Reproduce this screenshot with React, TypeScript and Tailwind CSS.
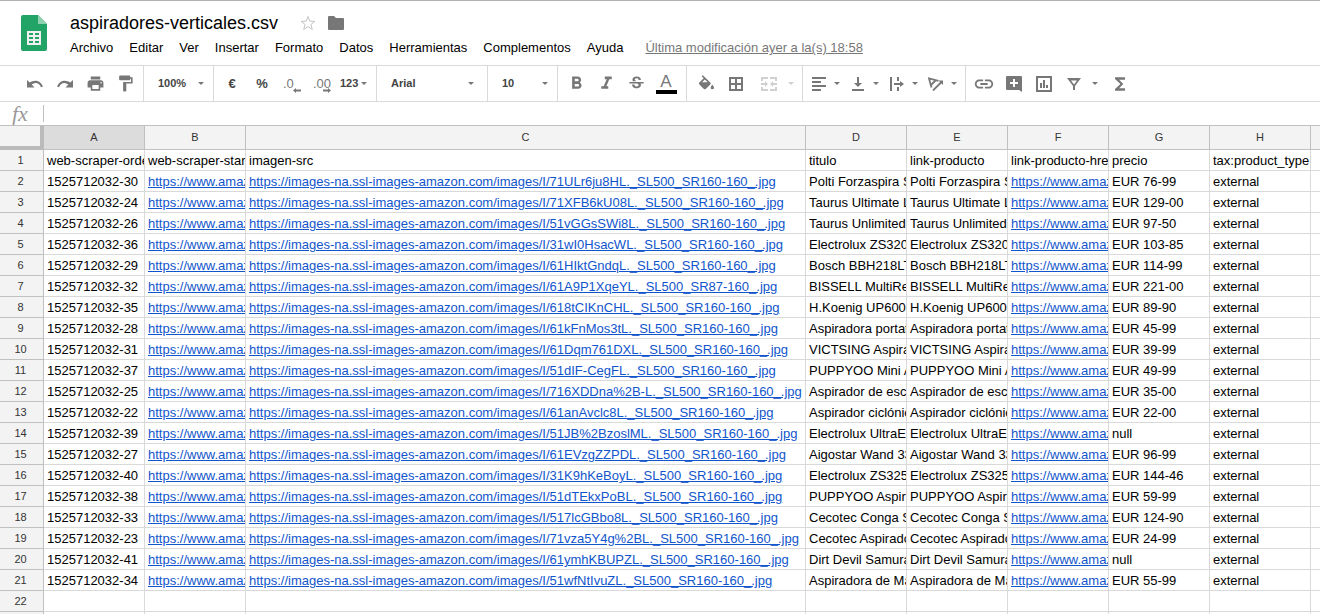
import React from "react";
import {
    MdFormatBold,
    MdFormatItalic,
    MdFormatPaint,
    MdFunctions,
    MdInsertLink,
    MdPrint,
    MdStrikethroughS,
} from "react-icons/md";

const menus = ["Archivo", "Editar", "Ver", "Insertar", "Formato", "Datos", "Herramientas", "Complementos", "Ayuda"];

const columns = ["A", "B", "C", "D", "E", "F", "G", "H"];

const imageBase = "https://images-na.ssl-images-amazon.com/images/I/";
const productUrl = "https://www.amazon.es";

// order suffix, image file, title, price
const products = [
    ["30", "71ULr6ju8HL._SL500_SR160-160_.jpg", "Polti Forzaspira SR", "EUR 76-99"],
    ["24", "71XFB6kU08L._SL500_SR160-160_.jpg", "Taurus Ultimate Li", "EUR 129-00"],
    ["26", "51vGGsSWi8L._SL500_SR160-160_.jpg", "Taurus Unlimited", "EUR 97-50"],
    ["36", "31wI0HsacWL._SL500_SR160-160_.jpg", "Electrolux ZS320", "EUR 103-85"],
    ["29", "61HIktGndqL._SL500_SR160-160_.jpg", "Bosch BBH218LT", "EUR 114-99"],
    ["32", "61A9P1XqeYL._SL500_SR87-160_.jpg", "BISSELL MultiReach", "EUR 221-00"],
    ["35", "618tCIKnCHL._SL500_SR160-160_.jpg", "H.Koenig UP600", "EUR 89-90"],
    ["28", "61kFnMos3tL._SL500_SR160-160_.jpg", "Aspiradora portatil", "EUR 45-99"],
    ["31", "61Dqm761DXL._SL500_SR160-160_.jpg", "VICTSING Aspirador", "EUR 39-99"],
    ["37", "51dIF-CegFL._SL500_SR160-160_.jpg", "PUPPYOO Mini As", "EUR 49-99"],
    ["25", "716XDDna%2B-L._SL500_SR160-160_.jpg", "Aspirador de escoba", "EUR 35-00"],
    ["22", "61anAvclc8L._SL500_SR160-160_.jpg", "Aspirador ciclónico", "EUR 22-00"],
    ["39", "51JB%2BzoslML._SL500_SR160-160_.jpg", "Electrolux UltraEn", "null"],
    ["27", "61EVzgZZPDL._SL500_SR160-160_.jpg", "Aigostar Wand 33", "EUR 96-99"],
    ["40", "31K9hKeBoyL._SL500_SR160-160_.jpg", "Electrolux ZS325", "EUR 144-46"],
    ["38", "51dTEkxPoBL._SL500_SR160-160_.jpg", "PUPPYOO Aspirador", "EUR 59-99"],
    ["33", "517lcGBbo8L._SL500_SR160-160_.jpg", "Cecotec Conga Slim", "EUR 124-90"],
    ["23", "71vza5Y4g%2BL._SL500_SR160-160_.jpg", "Cecotec Aspirador", "EUR 24-99"],
    ["41", "61ymhKBUPZL._SL500_SR160-160_.jpg", "Dirt Devil Samurai", "null"],
    ["34", "51wfNtIvuZL._SL500_SR160-160_.jpg", "Aspiradora de Mano", "EUR 55-99"],
];

const rows: string[][] = [
    ["web-scraper-order", "web-scraper-start", "imagen-src", "titulo", "link-producto", "link-producto-href", "precio", "tax:product_type"],
    ...products.map(([order, image, title, price]) => [
        "1525712032-" + order,
        productUrl,
        imageBase + image,
        title,
        title,
        productUrl,
        price,
        "external",
    ]),
    ["", "", "", "", "", "", "", ""],
];

const SheetsLogo = () => (
    <svg width="26" height="36" viewBox="0 0 26 36" aria-hidden="true">
        <path d="M2 0h15l9 9v25a2 2 0 0 1-2 2H2a2 2 0 0 1-2-2V2a2 2 0 0 1 2-2z" fill="#21a465" />
        <path d="M17 0l9 9h-9z" fill="#8ed1b1" />
        <path d="M6 16h14v14H6z" fill="#f1f1f1" />
        <path d="M8 18h4v2H8zM14 18h4v2h-4zM8 22h4v2H8zM14 22h4v2h-4zM8 26h4v2H8zM14 26h4v2h-4z" fill="#21a465" />
    </svg>
);

const StarIcon = () => (
    <svg width="16" height="16" viewBox="0 0 16 16" fill="none" stroke="currentColor" aria-hidden="true">
        <path d="M8 1.500l1.800 4.700 5 .200-3.900 3.100 1.400 4.900L8 11.600l-4.300 2.800 1.400-4.900L1.200 6.400l5-.200z" />
    </svg>
);

const FolderIcon = () => (
    <svg width="16" height="14" viewBox="0 0 16 14" aria-hidden="true">
        <path d="M0 1a1 1 0 0 1 1-1h5l2 2h7a1 1 0 0 1 1 1v10a1 1 0 0 1-1 1H1a1 1 0 0 1-1-1z" fill="currentColor" />
    </svg>
);

const Arrow = () => (
    <svg width="6" height="3" viewBox="0 0 6 3" className="shrink-0" aria-hidden="true">
        <path d="M0 0h6L3 3z" fill="currentColor" />
    </svg>
);

const UndoIcon = () => (
    <svg width="16" height="8" viewBox="0 0 16 8" aria-hidden="true">
        <path d="M0 0l2.800 2.500C6.500-.500 13.500-.300 16 6.500L14 7.300C12 2.500 8 2 4.700 4.500L7.500 7.500H0z" fill="currentColor" />
    </svg>
);

const RedoIcon = () => (
    <svg width="16" height="8" viewBox="0 0 16 8" aria-hidden="true">
        <path d="M16 0l-2.800 2.500C9.500-.500 2.500-.300 0 6.500L2 7.300C4 2.500 8 2 11.300 4.500L8.500 7.500H16z" fill="currentColor" />
    </svg>
);

const FillIcon = () => (
    <svg width="15" height="17" viewBox="3 0 18 20" aria-hidden="true">
        <path
            d="M16.560 8.940L7.620 0 6.210 1.410l2.380 2.380-5.150 5.150a1.490 1.490 0 0 0 0 2.120l5.500 5.500c.290.290.680.440 1.060.440s.770-.150 1.060-.440l5.500-5.500c.590-.580.590-1.530 0-2.120zM6.700 8.500L10 5.210 13.300 8.500zM19 11.500s-2 2.170-2 3.500a2 2 0 0 0 4 0c0-1.330-2-3.500-2-3.500z"
            fill="currentColor"
        />
    </svg>
);

const BordersIcon = () => (
    <svg width="14" height="14" viewBox="0 0 14 14" aria-hidden="true">
        <path d="M0 0h14v14H0zM2 2v4h4V2zM8 2v4h4V2zM2 8v4h4V8zM8 8v4h4V8z" fill="currentColor" fillRule="evenodd" />
    </svg>
);

const MergeIcon = () => (
    <svg width="16" height="14" viewBox="0 0 16 14" fill="none" stroke="currentColor" strokeWidth="2" aria-hidden="true">
        <path d="M1 4V1h6M9 1h6v3M1 10v3h6M9 13h6v-3" />
        <path d="M0 7h5M16 7h-5" />
        <path d="M4 4l3 3-3 3zM12 4L9 7l3 3z" fill="currentColor" stroke="none" />
    </svg>
);

const AlignIcon = () => (
    <svg width="14" height="14" viewBox="0 0 14 14" aria-hidden="true">
        <path d="M0 0h14v2H0zM0 4h9v2H0zM0 8h14v2H0zM0 12h9v2H0z" fill="currentColor" />
    </svg>
);

const BottomIcon = () => (
    <svg width="12" height="14" viewBox="0 0 12 14" aria-hidden="true">
        <path d="M5 0h2v6h3l-4 4-4-4h3zM0 12h12v2H0z" fill="currentColor" />
    </svg>
);

const WrapIcon = () => (
    <svg width="14" height="14" viewBox="0 0 14 14" fill="none" stroke="currentColor" strokeWidth="2" aria-hidden="true">
        <path d="M1 0v14M8 0v4M8 10v4M4 7h7" />
        <path d="M10 4l4 3-4 3z" fill="currentColor" stroke="none" />
    </svg>
);

const RotateIcon = () => (
    <svg width="16" height="14" viewBox="0 0 16 14" fill="none" stroke="currentColor" aria-hidden="true">
        <path d="M3.500 10.500L1 1.500l9.500 2.300M3 8l5-5" strokeWidth="1.800" />
        <path d="M5 13.500L13.500 5" strokeWidth="1.800" />
        <path d="M10.500 3.500H15V8z" fill="currentColor" stroke="none" />
    </svg>
);

const CommentIcon = () => (
    <svg width="16" height="16" viewBox="0 0 16 16" aria-hidden="true">
        <path d="M1 0h14a1 1 0 0 1 1 1v15l-3-2H1a1 1 0 0 1-1-1V1a1 1 0 0 1 1-1zM7 3v3H4v2h3v3h2V8h3V6H9V3z" fill="currentColor" fillRule="evenodd" />
    </svg>
);

const ChartIcon = () => (
    <svg width="16" height="16" viewBox="0 0 16 16" aria-hidden="true">
        <path d="M0 0h16v16H0zM2 2v12h12V2zM4 7h2v5H4zM7 4h2v8H7zM10 9h2v3h-2z" fill="currentColor" fillRule="evenodd" />
    </svg>
);

const FilterIcon = () => (
    <svg width="14" height="12" viewBox="0 0 14 12" aria-hidden="true">
        <path d="M0 0h14L8 8v4H6V8zM4 2.500l3 4 3-4z" fill="currentColor" fillRule="evenodd" />
    </svg>
);

const DecimalIcon = ({ text, right }: { text: string; right?: boolean }) => (
    <span className="relative w-[18px] text-left text-[13px] leading-[18px] font-normal">
        {text}
        <svg width="8" height="5" viewBox="0 0 8 5" className="absolute right-0 bottom-0" aria-hidden="true">
            {right ? (
                <path d="M0 1.500h5V0l3 2.500L5 5V3.500H0z" fill="currentColor" />
            ) : (
                <path d="M8 1.500H3V0L0 2.500 3 5V3.500h5z" fill="currentColor" />
            )}
        </svg>
    </span>
);

const Tool = ({ label, children }: { label: string; children: React.ReactNode }) => (
    <button aria-label={label} className="flex h-[34px] w-[30px] shrink-0 items-center justify-center">
        {children}
    </button>
);

const MenuTool = ({ label, children }: { label: string; children: React.ReactNode }) => (
    <button aria-label={label} className="flex h-[34px] w-[39px] shrink-0 items-center">
        <span className="flex w-[30px] justify-center">{children}</span>
        <Arrow />
    </button>
);

const ToolSelect = ({ label, value }: { label: string; value: string }) => (
    <label className="relative flex w-full items-center">
        <select aria-label={label} className="h-[34px] w-full appearance-none pl-[14px] font-bold text-[#444] outline-none">
            <option>{value}</option>
        </select>
        <span className="pointer-events-none absolute right-[9px]">
            <Arrow />
        </span>
    </label>
);

const Cell = ({ value }: { value: string }) => (
    <td className="h-[21px] overflow-hidden border-r border-b border-[#d9d9d9] pt-px pl-[3px] leading-[19px] whitespace-nowrap">
        {value.startsWith("https") ? (
            <a href={value} className="text-[#1155cc] underline">{value}</a>
        ) : (
            value
        )}
    </td>
);

const App: React.FC = () => {
    return (
        <div className="flex h-screen flex-col overflow-hidden border-t border-[#b0b0b0] bg-white font-['Liberation_Sans',Arial,sans-serif] text-[13px] text-black">
            <header className="flex h-16 shrink-0 gap-[23px] pt-[14px] pl-[21px]">
                <SheetsLogo />
                <div className="-mt-1 flex flex-col">
                    <div className="flex h-6 items-center">
                        <h1 className="text-[18px] leading-6">aspiradores-verticales.csv</h1>
                        <button aria-label="Destacar" className="ml-[22px] text-[#c4c4c4]">
                            <StarIcon />
                        </button>
                        <button aria-label="Mover a carpeta" className="ml-3 text-[#777]">
                            <FolderIcon />
                        </button>
                    </div>
                    <nav className="flex h-[26px] items-center gap-4 whitespace-nowrap">
                        {menus.map(menu => (
                            <button key={menu}>{menu}</button>
                        ))}
                        <a href="#historial" className="ml-[6px] text-[#777] underline">
                            Última modificación ayer a la(s) 18:58
                        </a>
                    </nav>
                </div>
            </header>

            <div className="flex h-[37px] shrink-0 items-stretch border-y border-[#d9d9d9] text-[11px] font-bold text-[#777]">
                <div className="flex w-36 shrink-0 items-center border-r border-[#d9d9d9] pl-5">
                    <Tool label="Deshacer"><UndoIcon /></Tool>
                    <Tool label="Rehacer"><RedoIcon /></Tool>
                    <Tool label="Imprimir"><MdPrint size={19} /></Tool>
                    <Tool label="Copiar formato"><MdFormatPaint size={19} /></Tool>
                </div>
                <div className="flex w-[70px] shrink-0 items-center border-r border-[#d9d9d9]">
                    <ToolSelect label="Zoom" value="100%" />
                </div>
                <div className="flex w-[163px] shrink-0 items-center border-r border-[#d9d9d9] pl-[3px]">
                    <Tool label="Moneda"><span className="text-[13px] text-[#444]">€</span></Tool>
                    <Tool label="Porcentaje"><span className="text-[13px] text-[#444]">%</span></Tool>
                    <Tool label="Reducir decimales"><DecimalIcon text=".0" /></Tool>
                    <Tool label="Aumentar decimales"><DecimalIcon text=".00" right /></Tool>
                    <button aria-label="Más formatos" className="flex h-[34px] items-center gap-[3px] pl-[3px]">
                        <span className="text-[#444]">123</span>
                        <Arrow />
                    </button>
                </div>
                <div className="flex w-[111px] shrink-0 items-center border-r border-[#d9d9d9] pr-1">
                    <ToolSelect label="Fuente" value="Arial" />
                </div>
                <div className="flex w-[70px] shrink-0 items-center border-r border-[#d9d9d9]">
                    <ToolSelect label="Tamaño de fuente" value="10" />
                </div>
                <div className="flex w-[129px] shrink-0 items-center border-r border-[#d9d9d9] pl-[3px]">
                    <Tool label="Negrita"><MdFormatBold size={21} /></Tool>
                    <Tool label="Cursiva"><MdFormatItalic size={21} /></Tool>
                    <Tool label="Tachado"><MdStrikethroughS size={19} /></Tool>
                    <Tool label="Color del texto">
                        <span className="flex w-[21px] flex-col items-center border-b-4 border-black text-[17px] leading-[17px] font-normal">A</span>
                    </Tool>
                </div>
                <div className="flex w-[116px] shrink-0 items-center border-r border-[#d9d9d9] pl-1">
                    <Tool label="Color de relleno"><FillIcon /></Tool>
                    <Tool label="Bordes"><BordersIcon /></Tool>
                    <button aria-label="Combinar celdas" className="flex h-[34px] items-center gap-[11px] pl-[10px] text-[#d0d0d0]">
                        <MergeIcon />
                        <Arrow />
                    </button>
                </div>
                <div className="flex w-[163px] shrink-0 items-center border-r border-[#d9d9d9] pl-px">
                    <MenuTool label="Alineación horizontal"><AlignIcon /></MenuTool>
                    <MenuTool label="Alineación vertical"><BottomIcon /></MenuTool>
                    <MenuTool label="Ajuste de texto"><WrapIcon /></MenuTool>
                    <MenuTool label="Rotación del texto"><RotateIcon /></MenuTool>
                </div>
                <div className="flex items-center pl-[3px]">
                    <Tool label="Insertar enlace"><MdInsertLink size={22} /></Tool>
                    <Tool label="Insertar comentario"><CommentIcon /></Tool>
                    <Tool label="Insertar gráfico"><ChartIcon /></Tool>
                    <Tool label="Crear filtro"><FilterIcon /></Tool>
                    <button aria-label="Vistas de filtro" className="flex h-[34px] w-4 items-center pl-[3px]">
                        <Arrow />
                    </button>
                    <Tool label="Funciones"><MdFunctions size={20} /></Tool>
                </div>
            </div>

            <div className="flex h-[23px] shrink-0 items-center">
                <label htmlFor="formula" className="w-[43px] pl-3 font-['Liberation_Serif',serif] text-[22px] leading-5 text-[#999] italic">
                    fx
                </label>
                <input id="formula" className="h-[17px] flex-1 border-l border-[#c0c0c0] px-2 outline-none" />
            </div>

            <table className="w-full table-fixed border-separate border-spacing-0 border-t border-[#c0c0c0] leading-5">
                <colgroup>
                    <col className="w-11" />
                    <col className="w-[101px]" />
                    <col className="w-[101px]" />
                    <col className="w-[560px]" />
                    <col className="w-[101px]" />
                    <col className="w-[101px]" />
                    <col className="w-[101px]" />
                    <col className="w-[101px]" />
                    <col className="w-[101px]" />
                    <col />
                </colgroup>
                <thead>
                    <tr className="bg-[#f3f3f3] text-[11px] text-[#333]">
                        <td className="h-6 border-r-4 border-b-4 border-[#bbb]"></td>
                        {columns.map(column => (
                            <th key={column} scope="col" className="h-6 border-r border-b border-[#c0c0c0] pb-px font-normal first-of-type:bg-[#dcdcdc]">
                                {column}
                            </th>
                        ))}
                        <td className="h-6 border-b border-[#c0c0c0]"></td>
                    </tr>
                </thead>
                <tbody>
                    {rows.map((row, index) => (
                        <tr key={index}>
                            <th scope="row" className="h-[21px] border-r border-b border-[#c0c0c0] bg-[#f3f3f3] pr-[2px] text-[11px] font-normal text-[#333]">
                                {index + 1}
                            </th>
                            {row.map((value, i) => (
                                <Cell key={i} value={value} />
                            ))}
                            <td className="border-b border-[#d9d9d9]"></td>
                        </tr>
                    ))}
                    <tr>
                        <th className="h-[21px] border-r border-[#c0c0c0] bg-[#f3f3f3]"></th>
                        {columns.map(column => (
                            <Cell key={column} value="" />
                        ))}
                    </tr>
                </tbody>
            </table>
        </div>
    );
};

export default App;
